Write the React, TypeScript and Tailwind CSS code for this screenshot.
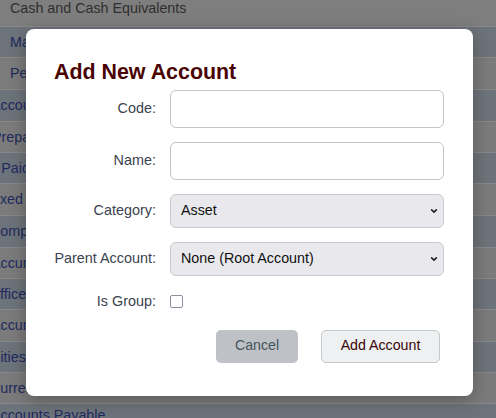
import React from "react";

const rows: { h: string; bg: string; text: string; cls: string }[] = [
  { h: "h-[26px]", bg: "bg-[#7e7e7e]", text: "Cash and Cash Equivalents", cls: "pl-[10px] text-[#2e2e2e] items-start" },
  { h: "h-[31px]", bg: "bg-[#6d737a]", text: "Main Bank Account", cls: "pl-[10px] text-[#1f2a5e] items-center" },
  { h: "h-[32px]", bg: "bg-[#7b7b7b]", text: "Petty Cash", cls: "pl-[10px] text-[#1f2a5e] items-center" },
  { h: "h-[32px]", bg: "bg-[#6d737a]", text: "Accounts Receivable", cls: "pl-0 ml-[-9px] text-[#1f2a5e] items-center" },
  { h: "h-[31px]", bg: "bg-[#7b7b7b]", text: "Prepaid Expenses", cls: "pl-0 ml-[-8px] text-[#1f2a5e] items-center" },
  { h: "h-[31px]", bg: "bg-[#6d737a]", text: "Tax Paid in Advance", cls: "pl-0 ml-[-25px] text-[#1f2a5e] items-center" },
  { h: "h-[32px]", bg: "bg-[#7b7b7b]", text: "Fixed Assets", cls: "pl-0 ml-[-12px] text-[#1f2a5e] items-center" },
  { h: "h-[32px]", bg: "bg-[#6d737a]", text: "Computer Equipment", cls: "pl-0 ml-[-10px] text-[#1f2a5e] items-center" },
  { h: "h-[31px]", bg: "bg-[#7b7b7b]", text: "Accumulated Depreciation", cls: "pl-0 ml-[-9px] text-[#1f2a5e] items-center" },
  { h: "h-[31px]", bg: "bg-[#6d737a]", text: "Office Equipment", cls: "pl-0 ml-[-11px] text-[#1f2a5e] items-center" },
  { h: "h-[32px]", bg: "bg-[#7b7b7b]", text: "Accumulated Depreciation", cls: "pl-0 ml-[-9px] text-[#1f2a5e] items-center" },
  { h: "h-[31px]", bg: "bg-[#6d737a]", text: "Liabilities", cls: "pl-0 ml-[-33px] text-[#1f2a5e] items-center" },
  { h: "h-[31px]", bg: "bg-[#7b7b7b]", text: "Current Liabilities", cls: "pl-0 ml-[-10px] text-[#1f2a5e] items-center" },
  { h: "h-[31px]", bg: "bg-[#6d737a]", text: "Accounts Payable", cls: "pl-0 ml-[-9px] text-[#1f2a5e] items-start pt-[3px]" },
];

function Chevron() {
  return (
    <svg
      className="pointer-events-none absolute right-[6px] top-1/2 -translate-y-1/2"
      width="8"
      height="6"
      viewBox="0 0 8 6"
      fill="none"
    >
      <path d="M1.6 1.8 L4 4.1 L6.4 1.8" stroke="#222" strokeWidth="1.6" strokeLinecap="round" strokeLinejoin="round" />
    </svg>
  );
}

export default function App() {
  return (
    <div className="relative h-[418px] w-[496px] overflow-hidden bg-[#7b7b7b] font-['Liberation_Sans',Arial,sans-serif]">
      <div className="flex flex-col">
        {rows.map((r, i) => (
          <div
            key={i}
            className={`flex shrink-0 overflow-hidden border-t border-[#888888] first:border-t-0 ${r.h} ${r.bg}`}
          >
            <div className={`flex w-full whitespace-nowrap text-[14.3px] leading-[17px] ${r.cls}`}>{r.text}</div>
          </div>
        ))}
      </div>

      <div className="absolute left-[26px] top-[29px] w-[447px] rounded-[8px] bg-white pl-[28px] pr-[29px] pt-[31px] pb-[33px] shadow-[0_4px_18px_rgba(0,0,0,0.28)]">
        <h2 className="mb-[6px] text-[21.4px] font-bold leading-[24px] text-[#4a0303]">Add New Account</h2>

        <div className="grid grid-cols-[102px_274px] items-center gap-x-[14px] gap-y-[14px] text-[14.4px] text-[#3b4250]">
          <label className="text-right">Code:</label>
          <input className="h-[38px] w-full rounded-[6px] border border-[#c4c4c8] bg-white px-[10px] outline-none" />

          <label className="text-right">Name:</label>
          <input className="h-[38px] w-full rounded-[6px] border border-[#c4c4c8] bg-white px-[10px] outline-none" />

          <label className="text-right">Category:</label>
          <div className="relative">
            <select className="h-[34px] w-full appearance-none rounded-[6px] border border-[#c9c9cd] bg-[#e9e9ed] pl-[10px] text-[14.3px] text-[#111] outline-none">
              <option>Asset</option>
            </select>
            <Chevron />
          </div>

          <label className="text-right">Parent Account:</label>
          <div className="relative">
            <select className="h-[34px] w-full appearance-none rounded-[6px] border border-[#c9c9cd] bg-[#e9e9ed] pl-[10px] text-[14.3px] text-[#111] outline-none">
              <option>None (Root Account)</option>
            </select>
            <Chevron />
          </div>

          <label className="text-right leading-[22px]">Is Group:</label>
          <div className="flex h-[22px] items-center">
            <span className="mt-[1px] block h-[13px] w-[13px] rounded-[2px] border border-[#8f8f9d] bg-white" />
          </div>
        </div>

        <div className="mt-[18px] flex justify-end gap-[23px] pr-[4px]">
          <button className="h-[33px] w-[82px] rounded-[5px] bg-[#bec2c6] pb-[1px] text-[14.2px] text-[#46525e]">Cancel</button>
          <button className="h-[33px] w-[119px] rounded-[5px] border border-[#c6c9cc] bg-[#eef0f1] pb-[1px] text-[14.2px] text-[#3a0606]">
            Add Account
          </button>
        </div>
      </div>
    </div>
  );
}
